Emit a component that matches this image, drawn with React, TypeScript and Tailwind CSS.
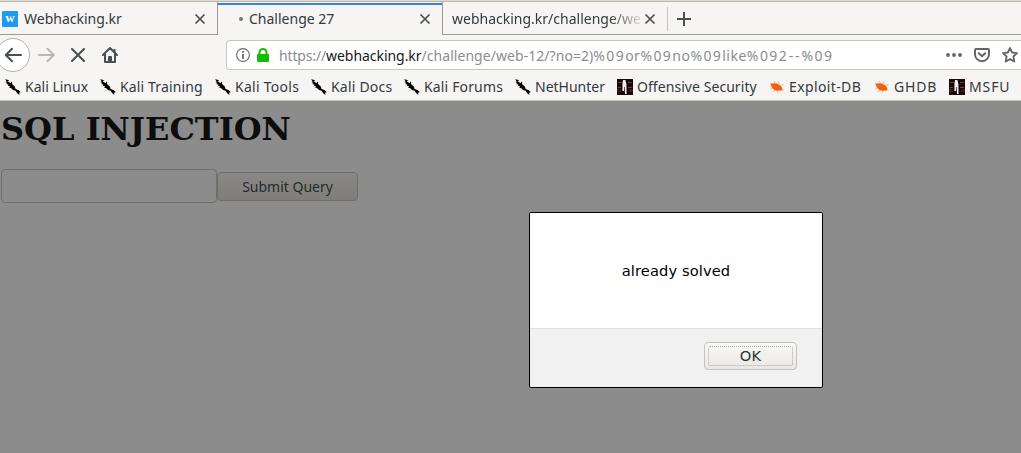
import type { ReactNode } from 'react';

function Cross({ className = '' }: { className?: string }) {
  return (
    <svg className={`shrink-0 ${className}`} width="12" height="12" viewBox="0 0 12 12" fill="none" stroke="#4a4f51" strokeWidth="1.7">
      <path d="M1.5 1.5l9 9M10.5 1.5l-9 9" />
    </svg>
  );
}

function KaliIcon() {
  return (
    <svg width="16" height="16" viewBox="0 0 16 16" className="mt-px shrink-0" fill="#000">
      <path d="M0 .2L2.6.8 4.4 2l-2 .2L6 4.2l.2-1.6 1 1-.2 1.4L9.8 7.5l.8 2.4 3.2 1.3 2 2-1.6.4.2 2.3-2.2-1.6-1.6-2.5L8 11 6.3 9.2l-2-.4L5 7.2l-2-.4.4-1.2-2.2-.6L2.4 4.2.4 3 1.8 2.4z" />
    </svg>
  );
}

function OffsecIcon() {
  return (
    <svg width="16" height="16" viewBox="0 0 16 16" className="mt-px shrink-0">
      <path fill="#1b0608" d="M0 0h16v16H0z" />
      <path fill="#604545" d="M1 3h4v1H1zM10 3h5v1h-5zM1 8h3v1H1zM11 8h4v1h-4z" />
      <path fill="#451316" d="M0 10h4v3H0zM12 10h4v3h-4z" />
      <path fill="#080202" d="M4 4h2v12H4zM10 3h1v13h-1z" />
      <path fill="#f2eeee" d="M6 1h2.4l1 4 .2 10H8L7.6 8H7v4H5.4V5z" />
    </svg>
  );
}

function BugIcon() {
  return (
    <svg width="16" height="16" viewBox="0 0 16 16" className="mt-px shrink-0">
      <path stroke="#f3a06c" strokeWidth=".9" d="M5 2l3 4M10 2.5L8.5 6M1 4l4 2M1.5 9.5L5 8.5M4 13l4-3.5M8.5 13.5l.5-3M11 6.5l3.5-1M12 9l2.5 3" />
      <path fill="#f2600e" d="M1.4 5.6L4 4.2l3.5.4 3 1.4 2 1.8 1 2.4-1.4 1.6-2.2-.4-2.4.4-2.8-1.4-2-2.4z" />
    </svg>
  );
}

const bookmarks: { label: string; icon: ReactNode; box: string }[] = [
  { label: 'Kali Linux', icon: <KaliIcon />, box: 'w-[95px]' },
  { label: 'Kali Training', icon: <KaliIcon />, box: 'w-[115px] tracking-[0.14px]' },
  { label: 'Kali Tools', icon: <KaliIcon />, box: 'w-[96px] tracking-[0.27px]' },
  { label: 'Kali Docs', icon: <KaliIcon />, box: 'w-[93px] tracking-[0.2px]' },
  { label: 'Kali Forums', icon: <KaliIcon />, box: 'w-[111px] tracking-[0.15px]' },
  { label: 'NetHunter', icon: <KaliIcon />, box: 'w-[102px]' },
  { label: 'Offensive Security', icon: <OffsecIcon />, box: 'w-[152px] tracking-[0.06px]' },
  { label: 'Exploit-DB', icon: <BugIcon />, box: 'w-[105px] tracking-[0.38px]' },
  { label: 'GHDB', icon: <BugIcon />, box: 'w-[75px] tracking-[0.8px]' },
  { label: 'MSFU', icon: <OffsecIcon />, box: 'w-[70px] tracking-[0.9px]' },
];

const tail = ['or', '%09', 'no', '%09', 'like', '%09', '2--'];

function Tabs() {
  return (
    <div className="flex h-[33px] text-[14px] leading-[20px]">
      <div className="flex w-[218px] items-center border-r border-b border-[#9b9b96] pt-px pl-[2px]">
        <span className="flex size-4 items-center justify-center rounded-[1px] bg-[#1d9bf0] pb-[3px] font-['Liberation_Serif',serif] text-[13px] leading-none font-bold text-white">w</span>
        <span className="ml-[6px] w-[170px] whitespace-nowrap">Webhacking.kr</span>
        <Cross />
      </div>
      <div className="mt-px flex w-[224px] items-center border-t-2 border-[#3584e4] pb-[3px]">
        <span className="ml-[21px] size-1 rounded-full bg-[#777]" />
        <span className="ml-[6px] w-[170px] whitespace-nowrap">Challenge 27</span>
        <Cross />
      </div>
      <div className="flex flex-1 items-center border-b border-l border-[#9b9b96] pt-px">
        <span className="ml-[9px] w-[192px] [mask-image:linear-gradient(to_right,black_82%,transparent_101%)] whitespace-nowrap">webhacking.kr/challenge/we</span>
        <Cross />
        <span className="ml-[11px] h-6 w-px bg-[#c4c2bf]" />
        <svg className="ml-[9px]" width="14" height="14" viewBox="0 0 14 14" stroke="#4a4f51" strokeWidth="2"><path d="M7 0v14M0 7h14" /></svg>
      </div>
    </div>
  );
}

function Toolbar() {
  return (
    <div className="flex h-[40px] items-center">
      <div className="-ml-[4px] flex size-[34px] shrink-0 items-center justify-center rounded-full border border-[#b4b2af] bg-white">
        <svg width="18" height="16" viewBox="0 0 18 16" fill="none" stroke="#4a4f51" strokeWidth="2" strokeLinecap="round" strokeLinejoin="round"><path d="M17 8H2M8 1.8L1.8 8 8 14.2" /></svg>
      </div>
      <svg className="ml-[8px] shrink-0" width="17" height="16" viewBox="0 0 17 16" fill="none" stroke="#b6b7b7" strokeWidth="2" strokeLinecap="round" strokeLinejoin="round"><path d="M1 8h14M9.5 1.8L15.7 8l-6.2 6.2" /></svg>
      <svg className="ml-[16px] shrink-0" width="14" height="14" viewBox="0 0 14 14" stroke="#4a4f51" strokeWidth="2" strokeLinecap="round"><path d="M1 1l12 12M13 1L1 13" /></svg>
      <svg className="ml-[17px] shrink-0" width="16" height="16" viewBox="0 0 16 16" fill="none" stroke="#4a4f51" strokeWidth="2" strokeLinecap="round" strokeLinejoin="round">
        <path d="M1 8l7-7 7 7M3 7.5V15h10V7.5" />
        <path d="M7 14v-4h2v4" />
        <path strokeLinecap="butt" d="M12.5 2v3" />
      </svg>
      <div className="ml-[108px] flex h-[30px] flex-1 items-center rounded-l-[4px] border border-r-0 border-[#c9c6c2] bg-white">
        <svg className="ml-[9px]" width="14" height="14" viewBox="0 0 14 14" fill="none" stroke="#66696b"><circle cx="7" cy="7" r="6.4" strokeWidth="1.1" /><path strokeWidth="1.8" d="M7 6v5M7 3v1.8" /></svg>
        <svg className="ml-[7px]" width="12" height="14" viewBox="0 0 12 14"><path d="M2.5 7V4.5a3.5 3.5 0 017 0V7" fill="none" stroke="#12bc00" strokeWidth="2" /><rect y="6" width="12" height="8" rx="1" fill="#12bc00" /></svg>
        <span className="ml-[10px] w-[667px] pt-px text-[14px] leading-5 whitespace-nowrap text-[#8c8d8e]">
          <span className="tracking-[-0.15px]">https://</span>
          <span className="tracking-[-0.05px] text-[#161819]">webhacking.kr</span>
          <span className="tracking-[0.05px]">/challenge/web-12/?no=2)</span>
          <span className="tracking-[1.4px]">%09</span>
          {tail.map((part, i) => (
            <span key={i} className={part === '%09' ? 'tracking-[1.4px]' : part === '2--' ? 'tracking-[1.9px]' : 'tracking-[0.5px]'}>{part}</span>
          ))}
          <span className="tracking-[1.4px]">%09</span>
        </span>
        <svg className="shrink-0" width="16" height="4" viewBox="0 0 16 4" fill="#626465"><circle cx="2" cy="2" r="1.9" /><circle cx="8" cy="2" r="1.9" /><circle cx="14" cy="2" r="1.9" /></svg>
        <svg className="ml-[12px] shrink-0" width="16" height="16" viewBox="0 0 16 16" fill="none" stroke="#626465" strokeWidth="2" strokeLinecap="round" strokeLinejoin="round"><path d="M2 2h12a1 1 0 011 1v4.2a7 7 0 01-14 0V3a1 1 0 011-1z" /><path d="M4.8 6.2L8 9.2l3.2-3" /></svg>
        <svg className="ml-[12px] shrink-0" width="16" height="16" viewBox="0 0 16 16" fill="none" stroke="#626465" strokeWidth="1.8" strokeLinejoin="round"><path d="M8 1l2.1 4.5 4.9.6-3.6 3.4.9 5L8 12.1l-4.3 2.4.9-5L1 6.1l4.9-.6z" /></svg>
      </div>
    </div>
  );
}

function Dialog() {
  return (
    <div role="alertdialog" className="absolute top-[212px] left-[529px] flex h-[176px] w-[294px] flex-col overflow-hidden rounded-[2px] border border-black bg-[#f1f1f1]">
      <div className="flex h-[115px] items-center justify-center bg-white pt-px font-['DejaVu_Sans',sans-serif] text-[14.67px] text-black">
        <span className="tracking-[0.1px]">already solved</span>
      </div>
      <div className="flex flex-1 justify-end border-t border-[#e2e2e2] pt-[13px] pr-[25px]">
        <button className="h-[28px] w-[93px] rounded-[4px] border border-[#c5c1bb] bg-linear-to-b from-[#f8f8f7] to-[#e9e8e6] p-[3px]">
          <span className="flex h-full items-center justify-center rounded-[2px] border border-dotted border-[#a9a9a6] font-['DejaVu_Sans',sans-serif] text-[14.67px] leading-none tracking-[0.2px] text-[#2e3436]">OK</span>
        </button>
      </div>
    </div>
  );
}

export default function App() {
  return (
    <div className="relative flex h-[453px] w-[1021px] flex-col overflow-hidden bg-[#8c8c8c] font-['Noto_Sans',sans-serif] text-[#34393b]">
      <header className="h-[101px] shrink-0 border-b border-[#c4bfb6] bg-[#f6f5f4]">
        <div className="h-[2px] border-b border-[#bdb8af] bg-[#dedad4]" />
        <Tabs />
        <Toolbar />
        <nav className="flex h-[23px] items-center pl-[5px] text-[14px]">
          {bookmarks.map((b) => (
            <a key={b.label} className={`flex shrink-0 items-center gap-[4px] whitespace-nowrap ${b.box}`}>
              {b.icon}
              <span>{b.label}</span>
            </a>
          ))}
        </nav>
      </header>
      <main className="pt-[9px] pl-[1px]">
        <h1 className="font-['DejaVu_Serif',serif] text-[32px] leading-[38px] font-bold whitespace-nowrap text-[#0d0d0d]">SQL INJECTION</h1>
        <form className="mt-[21px] flex items-center">
          <input aria-label="Query" className="h-[34px] w-[216px] rounded-[4px] border border-[#716f6c]" />
          <button type="button" className="h-[29px] w-[141px] rounded-[4px] border border-[#706d68] bg-linear-to-b from-[#898886] to-[#807e7b] pt-[2px] text-[14px] leading-[20px] text-[#252a2b]">Submit Query</button>
        </form>
      </main>
      <Dialog />
    </div>
  );
}
